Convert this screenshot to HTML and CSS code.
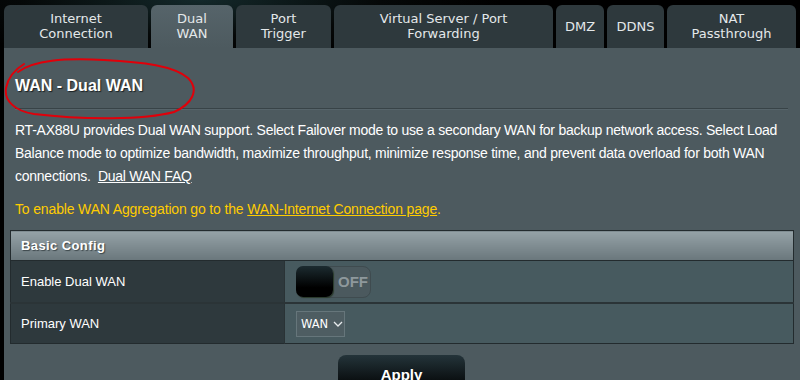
FILE: index.html
```html
<!DOCTYPE html>
<html>
<head>
<meta charset="utf-8">
<link rel="stylesheet" href="styles.css">
</head>
<body>
<div class="page">
  <nav class="tabs">
    <div class="tab tab-internet">Internet<br>Connection</div>
    <div class="tab tab-dual active">Dual<br>WAN</div>
    <div class="tab tab-port">Port<br>Trigger</div>
    <div class="tab tab-vs">Virtual Server / Port<br>Forwarding</div>
    <div class="tab tab-dmz">DMZ</div>
    <div class="tab tab-ddns">DDNS</div>
    <div class="tab tab-nat">NAT<br>Passthrough</div>
  </nav>
  <main class="panel">
    <h1 class="title">WAN - Dual WAN</h1>
    <div class="rule"></div>
    <p class="desc">RT-AX88U provides Dual WAN support. Select Failover mode to use a secondary WAN for backup network access. Select Load Balance mode to optimize bandwidth, maximize throughput, minimize response time, and prevent data overload for both WAN connections.&nbsp; <a class="faq">Dual WAN FAQ</a></p>
    <p class="notice">To enable WAN Aggregation go to the <a class="notice-link">WAN-Internet Connection page</a>.</p>
    <table class="config">
      <thead>
        <tr><th colspan="2">Basic Config</th></tr>
      </thead>
      <tbody>
        <tr class="row-tall">
          <td class="label">Enable Dual WAN</td>
          <td class="value">
            <div class="toggle"><span class="knob"></span><span class="off">OFF</span></div>
          </td>
        </tr>
        <tr class="row-short">
          <td class="label">Primary WAN</td>
          <td class="value">
            <div class="select">WAN <svg class="chev" width="10" height="6" viewBox="0 0 10 6"><path d="M1 1 L5 5 L9 1" fill="none" stroke="#e8ecee" stroke-width="1.3"/></svg></div>
          </td>
        </tr>
      </tbody>
    </table>
    <div class="actions"><button class="apply">Apply</button></div>
    <svg class="annot" width="200" height="70" viewBox="0 0 200 70">
      <path d="M14 16 C 30 4, 60 2, 100 4 C 140 6, 170 10, 184 22 C 196 34, 188 48, 170 56 C 140 64, 80 64, 30 58 C 10 55, 0 44, 2 32 C 4 22, 10 14, 20 8" fill="none" stroke="#e0000a" stroke-width="2" stroke-linecap="round"/>
    </svg>
  </main>
</div>
</body>
</html>
```
FILE: styles.css
```css
html, body {
  margin: 0;
  padding: 0;
  background: #000;
  height: 380px;
  overflow: hidden;
}
.page {
  background: radial-gradient(ellipse 300px 60px at 200px 0px, #14292b 0%, #050808 60%, #000 100%);
  height: 380px;
  position: relative;
}
.tabs {
  display: flex;
  gap: 3px;
  padding: 5px 0 0 4px;
  height: 43px;
}
.tab {
  height: 43px;
  box-sizing: border-box;
  background: #2e393d;
  border-radius: 6px 6px 0 0;
  color: #e4e8ea;
  font-family: "DejaVu Sans", Verdana, sans-serif;
  font-size: 13px;
  line-height: 15px;
  text-align: center;
  display: flex;
  align-items: center;
  justify-content: center;
  padding-bottom: 1px;
}
.tab.active {
  background: linear-gradient(#56646a, #4d5a5f);
}
.tab-internet { width: 144px; }
.tab-dual { width: 82px; }
.tab-port { width: 95px; }
.tab-vs { width: 219px; }
.tab-dmz { width: 48px; }
.tab-ddns { width: 57px; }
.tab-nat { width: 129px; }

.panel {
  margin-left: 4px;
  background: #4d5a5f;
  height: 332px;
  padding: 28px 10px 0 11px;
  box-sizing: border-box;
  position: relative;
  font-family: "Liberation Sans", Arial, sans-serif;
}
.title {
  margin: 0;
  font-size: 16px;
  line-height: 20px;
  font-weight: bold;
  color: #fff;
  text-shadow: 1px 1px 1px #1a2124;
}
.rule {
  margin-top: 12px;
  margin-right: 2px;
  height: 1px;
  background: #384347;
  border-bottom: 1px solid #56646a;
}
.desc {
  margin: 9px 0 0 0;
  font-size: 14px;
  line-height: 23px;
  letter-spacing: -0.25px;
  color: #fff;
}
.faq {
  color: #fff;
  text-decoration: underline;
}
.notice {
  margin: 10px 0 0 0;
  font-size: 14px;
  line-height: 23px;
  letter-spacing: -0.15px;
  color: #ffcc00;
}
.notice-link {
  color: #ffcc00;
  text-decoration: underline;
}
.config {
  margin: 9px 0 0 -5px;
  width: 784px;
  border-collapse: collapse;
  border: 1px solid #232b2e;
}
.config th {
  height: 29px;
  padding: 0 0 0 10px;
  text-align: left;
  font-size: 13px;
  font-weight: bold;
  color: #fff;
  letter-spacing: 0.4px;
  text-shadow: 1px 1px 1px #3b4549;
  background: linear-gradient(#95a2a7, #6a777c);
  border-bottom: 1px solid #232b2e;
}
.config td {
  padding: 0;
  font-size: 13px;
  color: #fff;
}
.label {
  width: 263px;
  padding-left: 10px !important;
  background: #2e393d;
  border-right: 1px solid #2a3336;
}
.value {
  background: #475a5f;
  padding-left: 11px !important;
}
.row-tall td {
  height: 41px;
  border-bottom: 2px solid #2b3437;
}
.row-short td {
  height: 39px;
}
.toggle {
  width: 75px;
  height: 32px;
  box-sizing: border-box;
  border: 1px solid #3f4b4f;
  border-radius: 8px;
  background: #4b595e;
  display: flex;
  align-items: center;
  position: relative;
}
.knob {
  width: 37px;
  height: 31px;
  margin-left: -1px;
  border-radius: 7px;
  background: linear-gradient(#1c2b30, #000 70%);
  box-shadow: 1px 1px 1px #2a3a2a;
}
.off {
  margin-left: 5px;
  font-size: 15px;
  font-weight: bold;
  color: #8e989c;
}
.select {
  width: 49px;
  height: 26px;
  box-sizing: border-box;
  border: 1px solid #66767b;
  background: #4e5d62;
  display: flex;
  align-items: center;
  padding-left: 4px;
  gap: 5px;
  font-family: "DejaVu Sans", Verdana, sans-serif;
  font-size: 11.5px;
  color: #fff;
}
.actions {
  display: flex;
  margin-top: 11px;
  padding-left: 323px;
}
.apply {
  width: 127px;
  height: 40px;
  border: none;
  border-radius: 8px;
  background: linear-gradient(#24343a, #000 90%);
  color: #fff;
  font-family: "Liberation Sans", Arial, sans-serif;
  font-size: 15px;
  font-weight: bold;
  padding: 0;
  line-height: 36px;
  align-self: flex-start;
}
.annot {
  position: absolute;
  left: 0px;
  top: 8px;
}
```
